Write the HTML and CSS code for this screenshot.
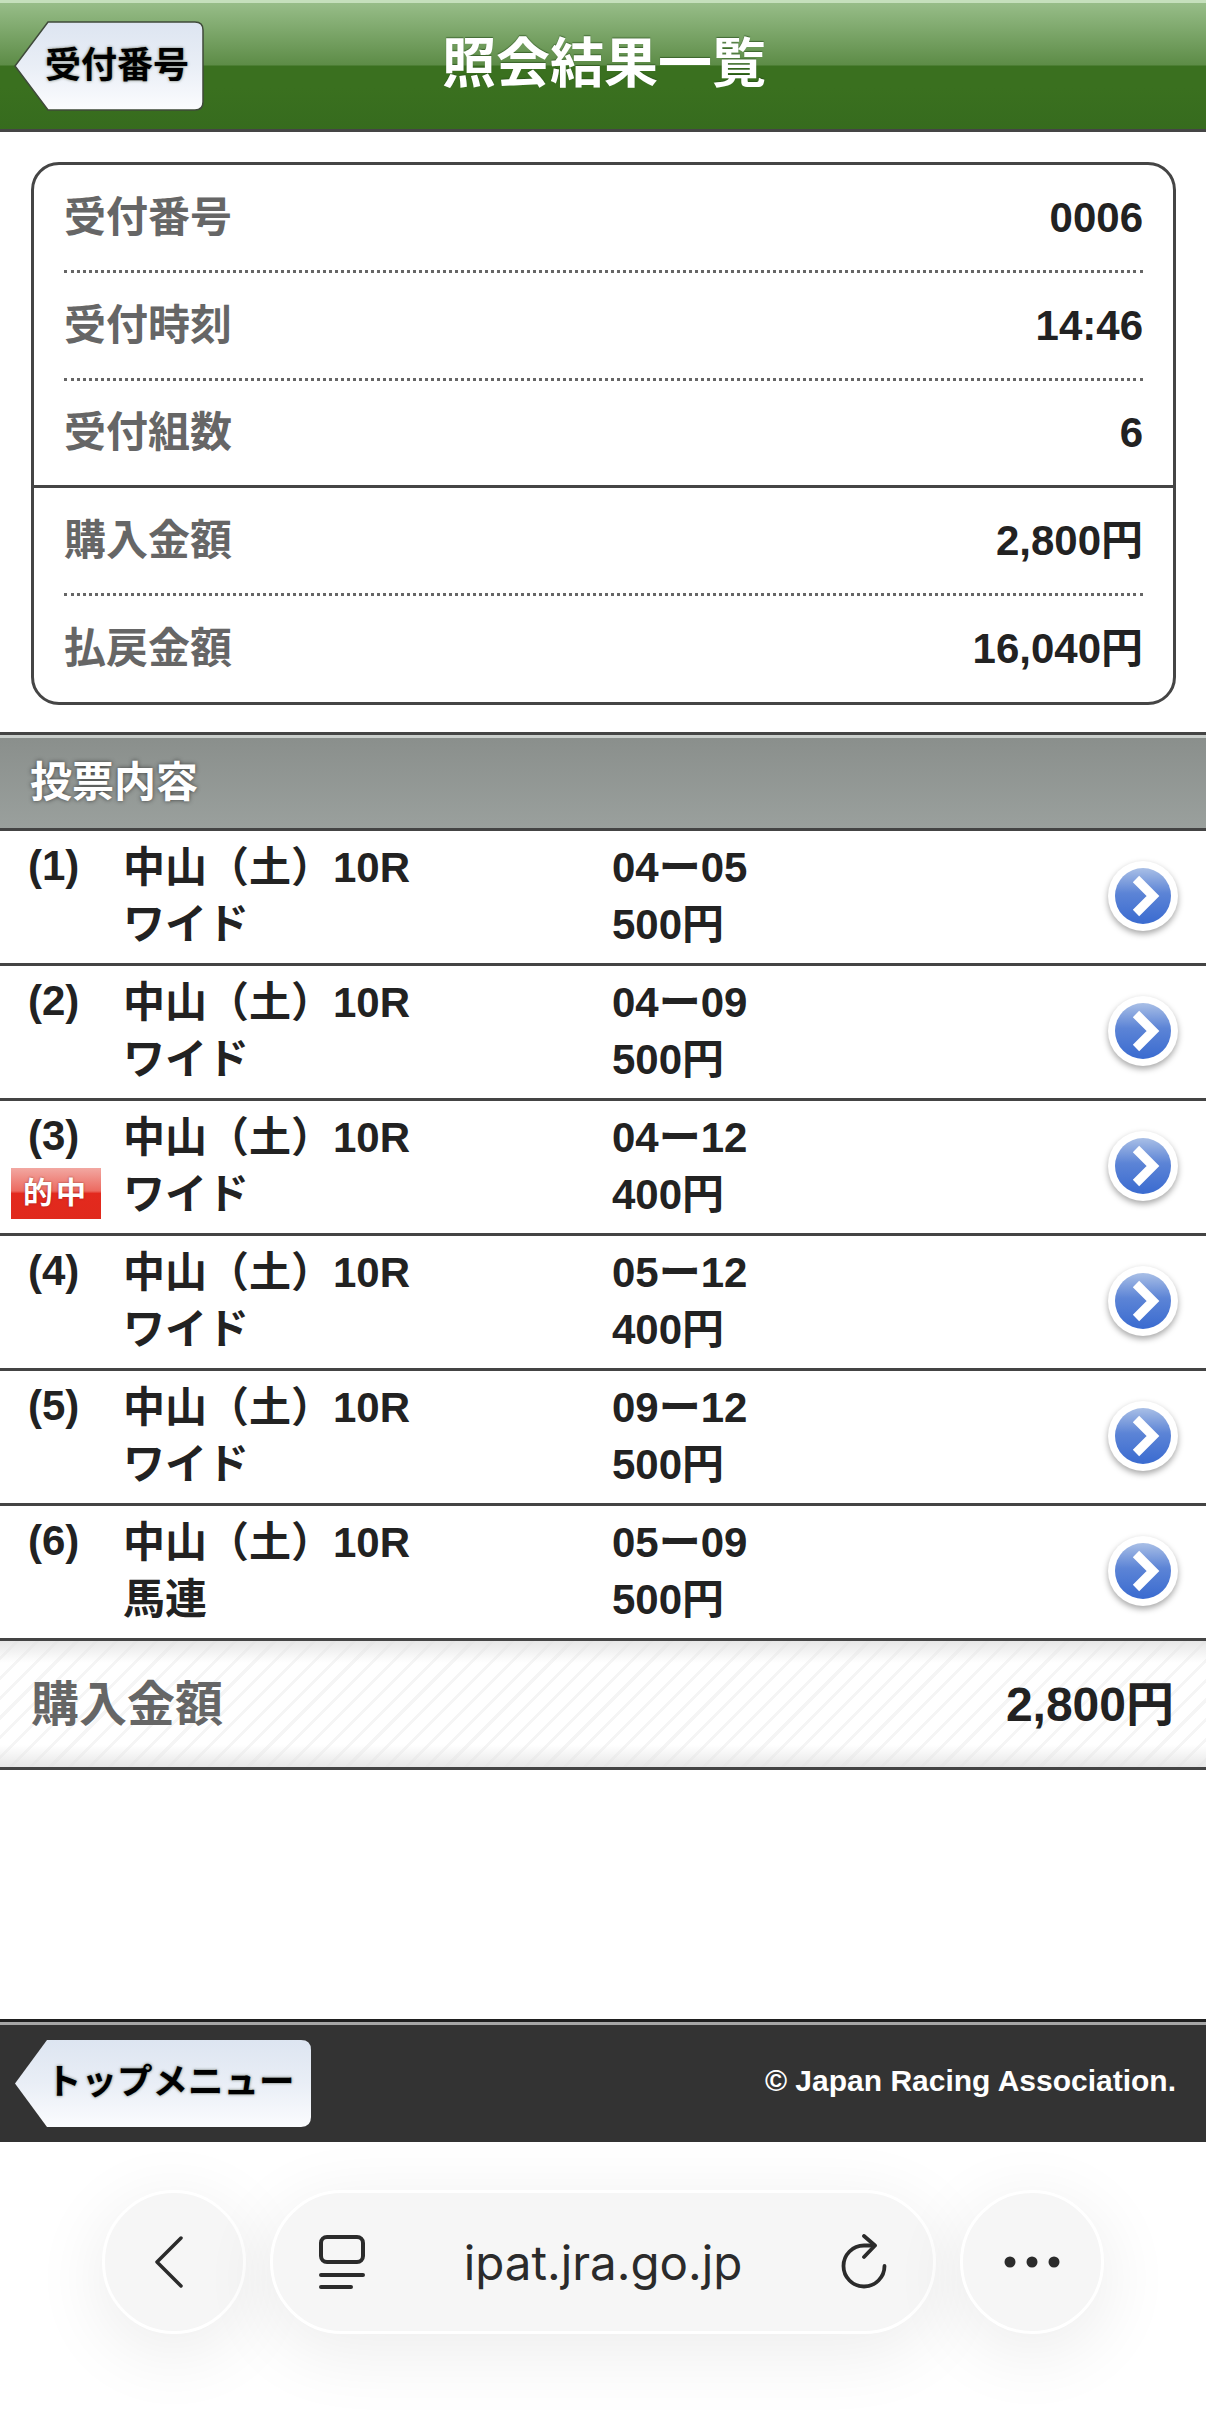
FILE: index.html
```html
<!DOCTYPE html>
<html lang="ja">
<head>
<meta charset="utf-8">
<title>照会結果一覧</title>
<link rel="stylesheet" href="styles.css">
</head>
<body>
<svg class="defs" width="0" height="0" aria-hidden="true">
  <defs>
    <linearGradient id="btnFill" x1="0" y1="0" x2="0" y2="1">
      <stop offset="0" stop-color="#dde5f1"/><stop offset="0.5" stop-color="#e9eef6"/><stop offset="1" stop-color="#fbfcfe"/>
    </linearGradient>
    <linearGradient id="goFill" x1="0" y1="0" x2="0" y2="1">
      <stop offset="0" stop-color="#a9bfe6"/><stop offset="0.45" stop-color="#5c84d6"/><stop offset="1" stop-color="#3a6bd0"/>
    </linearGradient>
    <symbol id="go" viewBox="0 0 80 80">
      <circle cx="40" cy="40" r="35" fill="#fff"/>
      <circle cx="40" cy="40" r="28" fill="url(#goFill)"/>
      <path d="M33 23 L50 40 L33 57" fill="none" stroke="#fff" stroke-width="9"/>
    </symbol>
  </defs>
</svg>

<header class="topbar">
  <a class="back back-top">
    <svg class="back-shape" viewBox="0 0 190 90" preserveAspectRatio="none"><path d="M34 1 H181 Q189 1 189 9 V81 Q189 89 181 89 H34 L1 45 Z" fill="url(#btnFill)" stroke="#3f4a3a" stroke-width="1.5"/></svg>
    <span class="back-label">受付番号</span>
  </a>
  <h1 class="title">照会結果一覧</h1>
</header>

<main>
  <section class="card">
    <div class="kv dotted"><span class="k">受付番号</span><span class="v">0006</span></div>
    <div class="kv dotted"><span class="k">受付時刻</span><span class="v">14:46</span></div>
    <div class="kv solid"><span class="k">受付組数</span><span class="v">6</span></div>
    <div class="kv dotted"><span class="k">購入金額</span><span class="v">2,800円</span></div>
    <div class="kv last"><span class="k">払戻金額</span><span class="v">16,040円</span></div>
  </section>

  <h2 class="section-head">投票内容</h2>

  <ul class="bets">
    <li class="bet"><span class="num">(1)</span><div class="col race">中山（土）10R<br>ワイド</div><div class="col pick"><span class="combo">04ー05</span><br>500円</div><svg class="go"><use href="#go"/></svg></li>
    <li class="bet"><span class="num">(2)</span><div class="col race">中山（土）10R<br>ワイド</div><div class="col pick"><span class="combo">04ー09</span><br>500円</div><svg class="go"><use href="#go"/></svg></li>
    <li class="bet"><span class="num">(3)</span><span class="hit">的中</span><div class="col race">中山（土）10R<br>ワイド</div><div class="col pick"><span class="combo">04ー12</span><br>400円</div><svg class="go"><use href="#go"/></svg></li>
    <li class="bet"><span class="num">(4)</span><div class="col race">中山（土）10R<br>ワイド</div><div class="col pick"><span class="combo">05ー12</span><br>400円</div><svg class="go"><use href="#go"/></svg></li>
    <li class="bet"><span class="num">(5)</span><div class="col race">中山（土）10R<br>ワイド</div><div class="col pick"><span class="combo">09ー12</span><br>500円</div><svg class="go"><use href="#go"/></svg></li>
    <li class="bet"><span class="num">(6)</span><div class="col race">中山（土）10R<br>馬連</div><div class="col pick"><span class="combo">05ー09</span><br>500円</div><svg class="go"><use href="#go"/></svg></li>
  </ul>

  <div class="total"><span class="total-k">購入金額</span><span class="total-v">2,800円</span></div>
</main>

<footer class="foot">
  <a class="back back-foot">
    <svg class="back-shape" viewBox="0 0 296 88" preserveAspectRatio="none"><path d="M32 0 H286 Q296 0 296 10 V78 Q296 88 286 88 H32 L0 44 Z" fill="url(#btnFill)"/></svg>
    <span class="back-label">トップメニュー</span>
  </a>
  <small class="copy">© Japan Racing Association.</small>
</footer>

<nav class="browser">
  <button class="round round-back">
    <svg width="30" height="54" viewBox="0 0 30 54"><path d="M27 3 L3 27 L27 51" fill="none" stroke="#2b2b2b" stroke-width="3.500" stroke-linecap="round" stroke-linejoin="round"/></svg>
  </button>
  <div class="address">
    <svg width="48" height="56" viewBox="0 0 48 56"><rect x="3" y="3" width="42" height="25" rx="6" fill="none" stroke="#2b2b2b" stroke-width="4"/><path d="M3 41 H45 M3 53 H33" fill="none" stroke="#2b2b2b" stroke-width="4" stroke-linecap="round"/></svg>
    <span class="url">ipat.jra.go.jp</span>
    <svg width="48" height="56" viewBox="0 0 48 56"><path d="M44.500 32 A20.500 20.500 0 1 1 24 11.500 H33" fill="none" stroke="#2b2b2b" stroke-width="3.800" stroke-linecap="round"/><path d="M24 2 L35 11.500 L24 23" fill="none" stroke="#2b2b2b" stroke-width="3.800" stroke-linecap="round" stroke-linejoin="round"/></svg>
  </div>
  <button class="round">
    <svg width="56" height="12" viewBox="0 0 56 12"><circle cx="6" cy="6" r="5.500" fill="#2b2b2b"/><circle cx="28" cy="6" r="5.500" fill="#2b2b2b"/><circle cx="50" cy="6" r="5.500" fill="#2b2b2b"/></svg>
  </button>
</nav>
</body>
</html>
```

FILE: styles.css
```css
* { box-sizing: border-box; }
html, body { margin: 0; padding: 0; }
body {
  width: 1206px;
  height: 2436px;
  overflow: hidden;
  background: #fff;
  color: #222;
  font-family: "Liberation Sans", "Noto Sans CJK JP", sans-serif;
  font-weight: 700;
  display: flex;
  flex-direction: column;
}
.defs { position: absolute; }
ul { list-style: none; margin: 0; padding: 0; }
h1, h2 { margin: 0; }

.topbar {
  height: 132px;
  border-bottom: 3px solid #454545;
  border-top: 3px solid #c5e0bc;
  background: linear-gradient(#97bd88 0, #5d8c47 62px, #3a701f 63px, #3a701f 85px, #366b1e 129px);
  display: flex;
  align-items: center;
  position: relative;
}
.back { display: block; position: relative; }
.back-shape { position: absolute; inset: 0; width: 100%; height: 100%; display: block; }
.back-label { position: relative; color: #000; text-shadow: 0 0 3px rgba(60,70,50,.75); white-space: nowrap; }
.back-top { width: 190px; height: 90px; margin: 0 0 0 14px; flex: none; }
.back-top .back-label { display: block; font-size: 36px; line-height: 90px; padding-left: 31px; }
.title {
  position: absolute;
  left: 442px;
  top: 30px;
  color: #fff;
  font-size: 54px;
  line-height: 62px;
  font-weight: 700;
  white-space: nowrap;
  text-shadow: 0 -1px 1px rgba(30,70,20,.6);
}

.card {
  margin: 30px 30px 27px 31px;
  height: 543px;
  border: 3px solid #454545;
  border-radius: 28px;
  padding: 0 30px;
  position: relative;
}
.kv {
  height: 108px;
  display: flex;
  justify-content: space-between;
  align-items: center;
}
.dotted { border-bottom: 3px dotted #666; }
.solid { position: relative; height: 107px; padding-bottom: 3px; }
.last { padding-bottom: 3px; }
.solid::after { content: ""; position: absolute; left: -30px; right: -30px; bottom: 0; height: 3px; background: #454545; }
.k { color: #666; font-size: 42px; line-height: 48px; }
.v { color: #222; font-size: 42px; line-height: 48px; }

.section-head {
  height: 99px;
  border-top: 3px solid #444;
  border-bottom: 3px solid #444;
  background: linear-gradient(#c9cecb 0, #c9cecb 3px, #8a8f8c 3px, #9aa09d 100%);
  color: #fff;
  font-size: 42px;
  line-height: 91px;
  padding: 2px 0 0 30px;
  text-shadow: 0 0 4px rgba(40,40,40,.8);
}

.bet {
  height: 135px;
  border-bottom: 3px solid #444;
  position: relative;
  display: flex;
  align-items: flex-start;
  padding-top: 8px;
  font-size: 42px;
  line-height: 57px;
  color: #222;
}
.num { width: 123px; padding-left: 28px; flex: none; line-height: 54px; }
.race { width: 489px; flex: none; }
.pick { flex: 1; }
.go { position: absolute; right: 23px; top: 25px; width: 80px; height: 80px; filter: drop-shadow(0 3px 3px rgba(0,0,0,.35)); }
.hit {
  position: absolute;
  left: 11px;
  top: 67px;
  width: 90px;
  height: 51px;
  background: linear-gradient(#f2a8a2, #ec6a60 45%, #e3291e 50%, #e02a1c);
  color: #fff;
  font-size: 30px;
  line-height: 50px;
  text-align: center;
  letter-spacing: 3px;
  text-shadow: 0 0 2px rgba(120,30,30,.8);
}

.total {
  height: 129px;
  border-bottom: 3px solid #444;
  background:
    linear-gradient(rgba(225,225,225,.8), rgba(255,255,255,0) 22px, rgba(255,255,255,0) 104px, rgba(225,225,225,.8)),
    repeating-linear-gradient(135deg, #fff 0, #fff 11px, #f5f5f5 11px, #f5f5f5 14px);
  display: flex;
  justify-content: space-between;
  align-items: center;
  padding: 2px 32px 0 31px;
  font-size: 48px;
  line-height: 56px;
}
.total-k { color: #666; }

.foot {
  position: absolute;
  left: 0;
  top: 2019px;
  width: 1206px;
  height: 123px;
  border-top: 3px solid #1f1f1f;
  background: linear-gradient(#a5a5a5 0, #a5a5a5 3px, #333 3px);
  display: flex;
  align-items: center;
  justify-content: space-between;
  padding: 3px 30px 0 15px;
}
.back-foot { width: 296px; height: 87px; flex: none; }
.back-foot .back-label { display: block; font-size: 35.500px; line-height: 84px; padding-left: 31px; }
.copy { color: #fff; font-size: 30px; padding-bottom: 6px; }

.browser {
  position: absolute;
  left: 0;
  top: 2142px;
  width: 1206px;
  height: 294px;
  display: flex;
  justify-content: center;
  gap: 24px;
  padding: 48px 0 0 0;
  align-items: flex-start;
  background: #fff;
  font-weight: 400;
}
.round, .address {
  height: 144px;
  background: #f6f6f6;
  border: 3px solid #fff;
  box-shadow: 0 16px 70px 6px rgba(0,0,0,.07);
  display: flex;
  align-items: center;
}
.round { width: 144px; border-radius: 50%; justify-content: center; padding: 0; }
.round-back svg { margin-right: 10px; }
.address { width: 666px; border-radius: 72px; justify-content: space-between; padding: 0 45px; }
.url { font-family: Inter, "Liberation Sans", sans-serif; font-size: 47.500px; color: #2b2b2b; font-weight: 400; }
```
